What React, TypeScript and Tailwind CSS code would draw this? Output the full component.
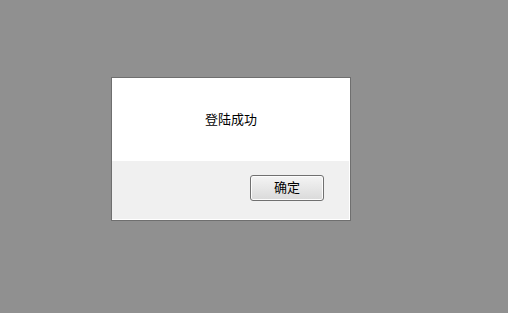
export default function App() {
  return (
    <div
      className="w-[508px] h-[313px] bg-[#909090] pt-[77px] pl-[111px]"
      style={{ fontFamily: '"Liberation Sans", "Noto Sans CJK SC", sans-serif' }}
    >
      <div className="w-[240px] h-[144px] border border-[#6f6f6f] bg-white flex flex-col">
        <div className="h-[83px] flex items-center justify-center text-[13px] text-black">
          登陆成功
        </div>
        <div className="flex-1 bg-[#f0f0f0] border-r border-b border-white flex justify-end items-start pt-[14px] pr-[25px]">
          <button className="w-[74px] h-[26px] rounded-[3px] border border-[#707070] bg-gradient-to-b from-[#f4f4f4] to-[#dadada] text-[13px] text-black flex items-center justify-center shadow-[inset_0_0_0_1px_#fcfcfc]">
            确定
          </button>
        </div>
      </div>
    </div>
  );
}
